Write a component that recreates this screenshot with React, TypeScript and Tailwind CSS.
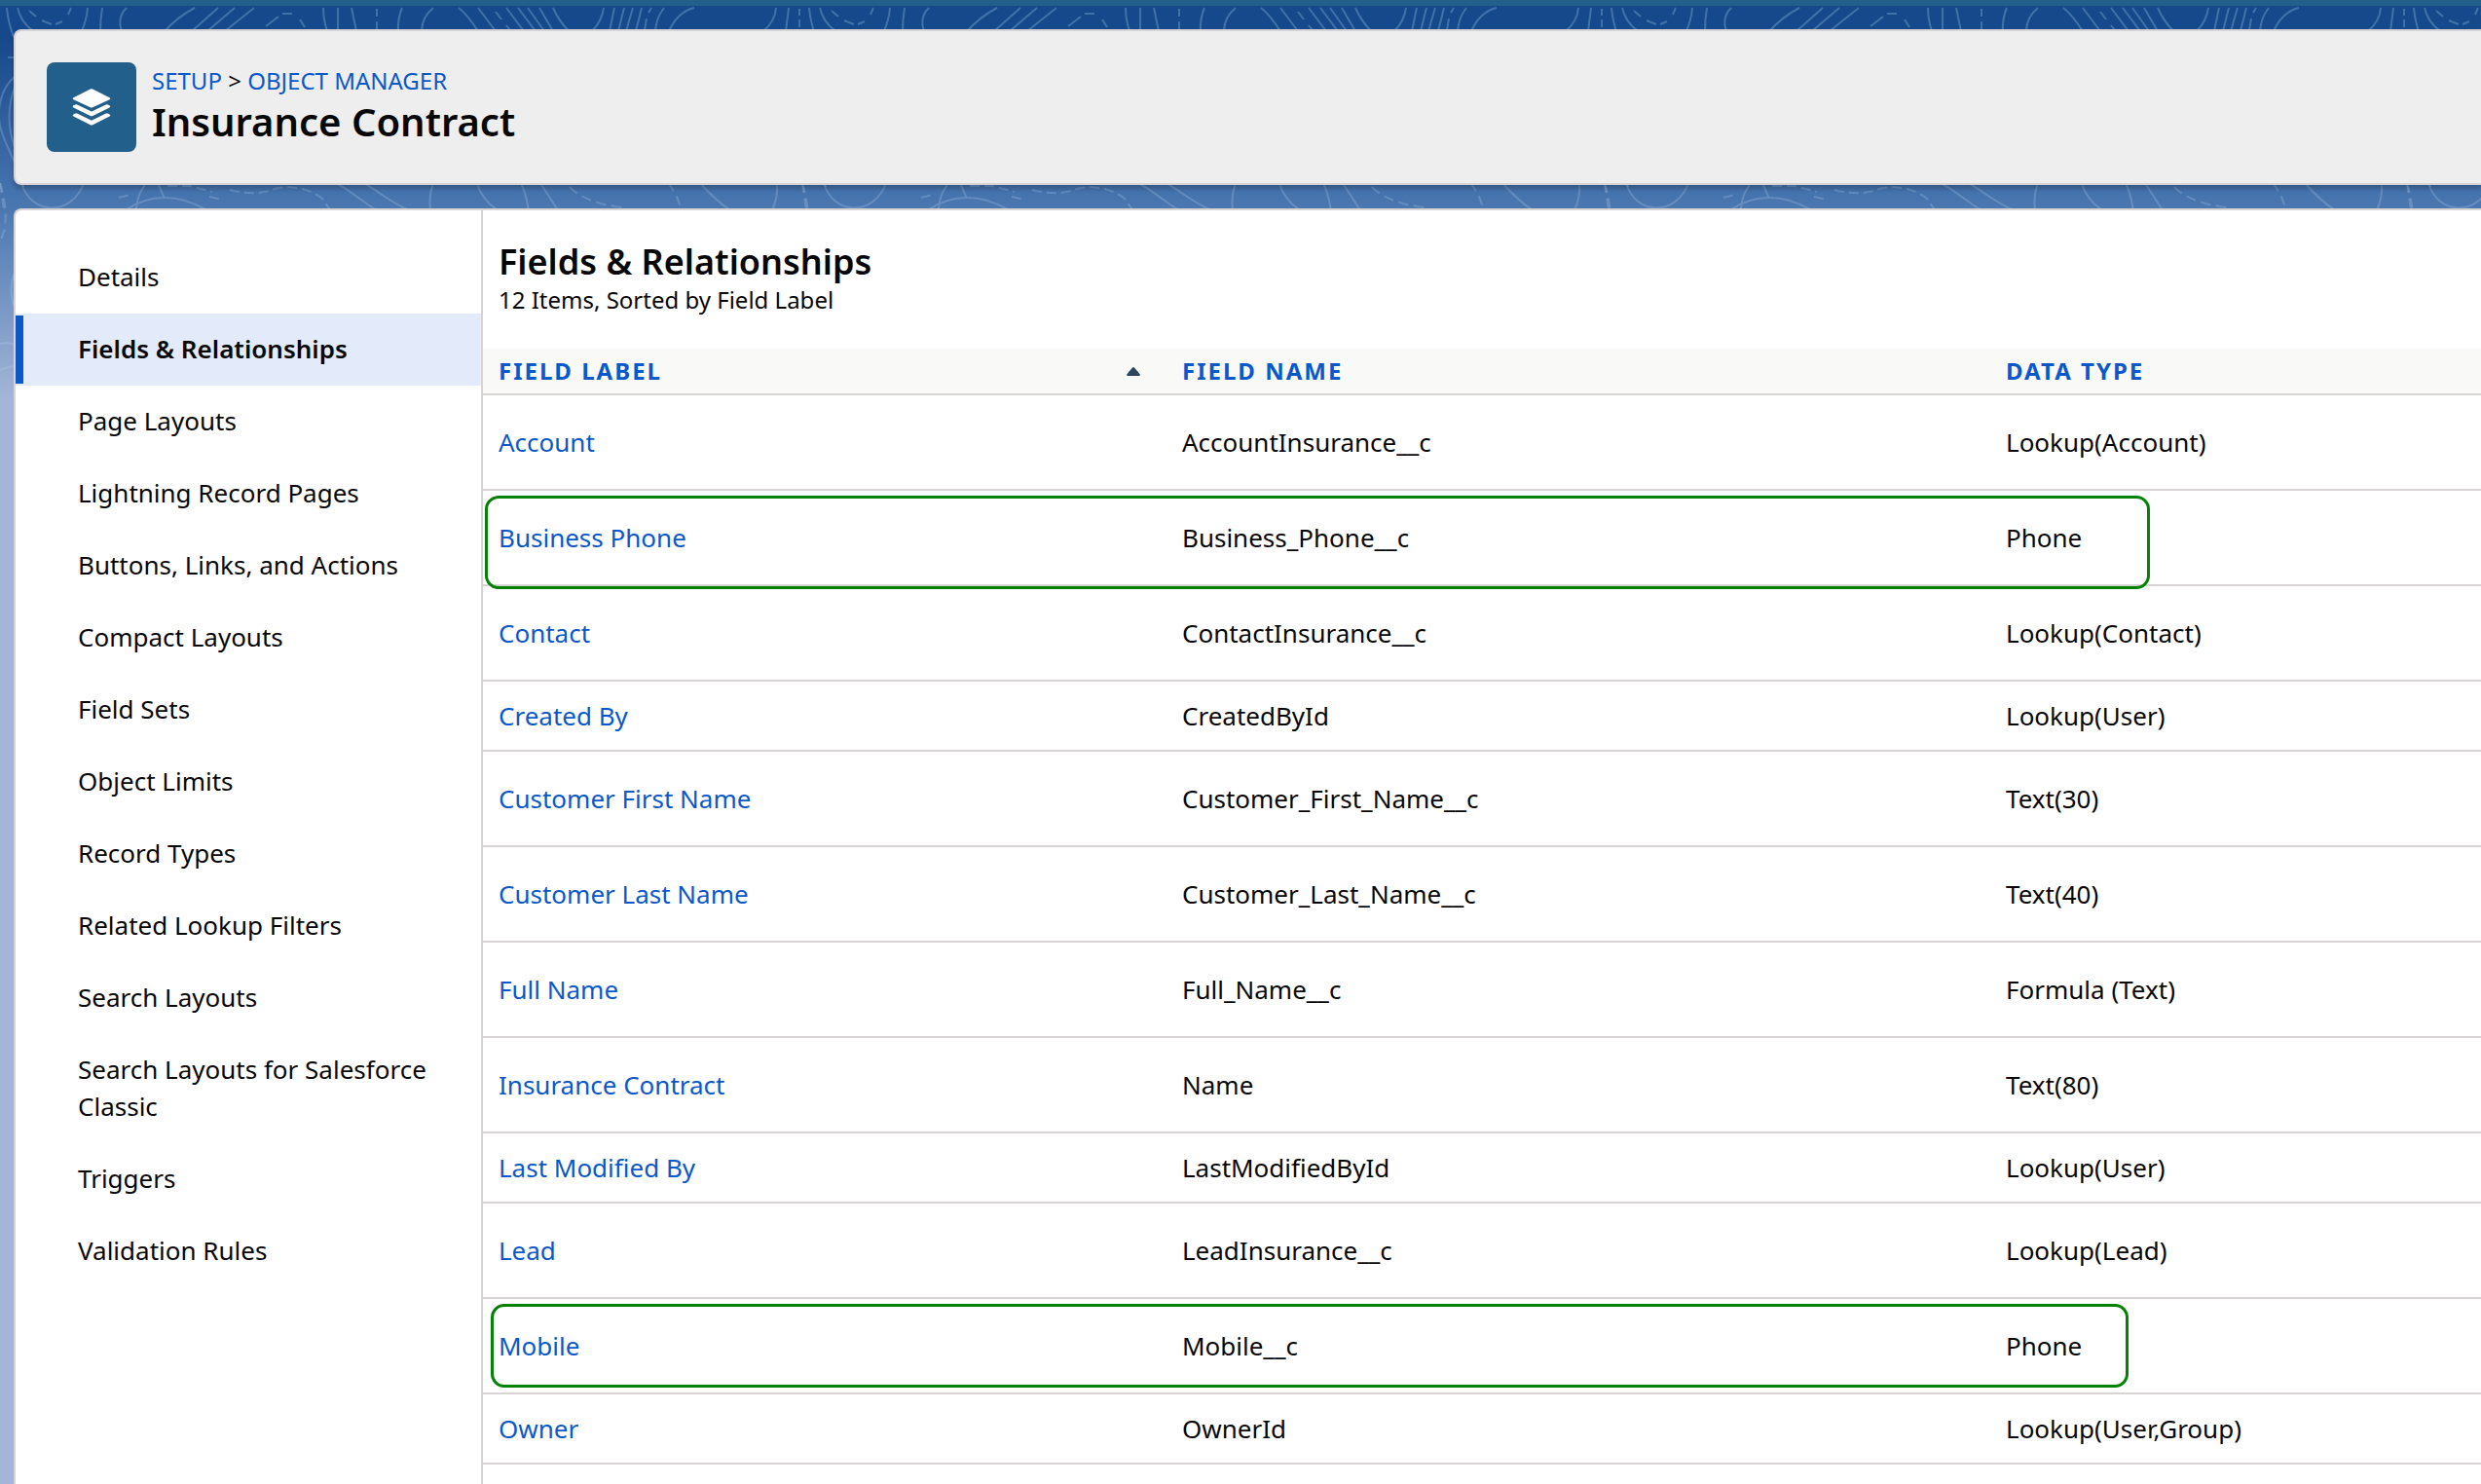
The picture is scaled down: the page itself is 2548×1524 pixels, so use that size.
import React from 'react'

const navItems = [
  'Details',
  'Fields & Relationships',
  'Page Layouts',
  'Lightning Record Pages',
  'Buttons, Links, and Actions',
  'Compact Layouts',
  'Field Sets',
  'Object Limits',
  'Record Types',
  'Related Lookup Filters',
  'Search Layouts',
  'Search Layouts for Salesforce Classic',
  'Triggers',
  'Validation Rules',
]

type Field = {
  label: string
  name: string
  type: string
  short?: boolean
  outline?: string
}

const fields: Field[] = [
  { label: 'Account', name: 'AccountInsurance__c', type: 'Lookup(Account)' },
  { label: 'Business Phone', name: 'Business_Phone__c', type: 'Phone', outline: 'left-[2px] right-[340px] h-24' },
  { label: 'Contact', name: 'ContactInsurance__c', type: 'Lookup(Contact)' },
  { label: 'Created By', name: 'CreatedById', type: 'Lookup(User)', short: true },
  { label: 'Customer First Name', name: 'Customer_First_Name__c', type: 'Text(30)' },
  { label: 'Customer Last Name', name: 'Customer_Last_Name__c', type: 'Text(40)' },
  { label: 'Full Name', name: 'Full_Name__c', type: 'Formula (Text)' },
  { label: 'Insurance Contract', name: 'Name', type: 'Text(80)' },
  { label: 'Last Modified By', name: 'LastModifiedById', type: 'Lookup(User)', short: true },
  { label: 'Lead', name: 'LeadInsurance__c', type: 'Lookup(Lead)' },
  { label: 'Mobile', name: 'Mobile__c', type: 'Phone', outline: 'left-[8px] right-[362px] h-[86px]' },
  { label: 'Owner', name: 'OwnerId', type: 'Lookup(User,Group)', short: true },
]

const App: React.FC = () => (
  <div className="relative min-h-screen overflow-hidden bg-[#a3b6d8] font-['Noto_Sans',sans-serif] text-[26px] text-[#080707]">
    <Backdrop />
    <div className="relative flex min-h-screen flex-col pl-3.5">
      <Header />
      <main className="mt-6 flex flex-1 rounded-tl-lg border-2 border-r-0 border-b-0 border-[#d8d4d4] bg-white">
        <Sidebar />
        <section className="min-w-0 flex-1">
          <div className="px-4 py-8">
            <h2 className="text-[36px] leading-[42px] font-semibold">Fields &amp; Relationships</h2>
            <p className="text-2xl leading-9">12 Items, Sorted by Field Label</p>
          </div>
          <FieldTable />
        </section>
      </main>
    </div>
  </div>
)

export default App

const Header: React.FC = () => (
  <header className="mt-[30px] flex h-40 items-start gap-4 rounded-l-lg border-2 border-r-0 border-[#d8d4d4] bg-[#eeeeee] px-8 pt-8 shadow-[0_4px_4px_rgba(0,0,0,0.2)]">
    <div className="flex size-[92px] items-center justify-center rounded-lg bg-[#225f8b]">
      <LayersIcon />
    </div>
    <div>
      <nav className="text-2xl leading-[38px]">
        <a href="#setup" className="text-[#0b58c8]">SETUP</a>
        {' > '}
        <a href="#object-manager" className="text-[#0b58c8]">OBJECT MANAGER</a>
      </nav>
      <h1 className="text-[40px] leading-[46px] font-semibold">Insurance Contract</h1>
    </div>
  </header>
)

const Sidebar: React.FC = () => (
  <nav className="w-[480px] shrink-0 border-r-2 border-[#d8d4d4] pt-8">
    <ul>
      {navItems.map((item) => (
        <li key={item}>
          {item === 'Fields & Relationships' ? (
            <a href="#fields" className="relative block bg-[#e3ebfa] pt-[17px] pr-8 pb-[19px] pl-16 leading-[38px] font-semibold">
              <span className="absolute inset-y-[2px] left-0 w-2 bg-[#0b58c8]" />
              {item}
            </a>
          ) : (
            <a href="#section" className="block pt-[17px] pr-8 pb-[19px] pl-16 leading-[38px]">
              {item}
            </a>
          )}
        </li>
      ))}
    </ul>
  </nav>
)

const FieldTable: React.FC = () => (
  <table className="w-full table-fixed border-separate border-spacing-0 text-left">
    <thead>
      <tr className="h-12 bg-[#f9f9f7] text-2xl text-[#0b58c8]">
        <th className="w-[34.21%] border-b-2 border-[#d8d4d4] pr-[27px] pl-4">
          <button className="flex w-full items-center justify-between font-bold tracking-[2px]">
            FIELD LABEL
            <SortIcon />
          </button>
        </th>
        <th className="w-[41.23%] border-b-2 border-[#d8d4d4] px-4">
          <button className="font-bold tracking-[2px]">FIELD NAME</button>
        </th>
        <th className="border-b-2 border-[#d8d4d4] px-4">
          <button className="font-bold tracking-[2px]">DATA TYPE</button>
        </th>
      </tr>
    </thead>
    <tbody>
      {fields.map((field) => (
        <tr key={field.label} className={field.short ? 'h-[72px]' : 'relative h-[98px]'}>
          <td className="border-b-2 border-[#d8d4d4] px-4">
            <a href="#field" className="text-[#0b58c8]">{field.label}</a>
            {field.outline && (
              <span className={`pointer-events-none absolute top-[5px] z-10 rounded-[14px] border-3 border-[#058205] ${field.outline}`} />
            )}
          </td>
          <td className="border-b-2 border-[#d8d4d4] px-4">{field.name}</td>
          <td className="border-b-2 border-[#d8d4d4] px-4">{field.type}</td>
        </tr>
      ))}
    </tbody>
  </table>
)

const SortIcon = () => (
  <svg className="h-[9px] w-3.5 fill-[#2e4560]" viewBox="0 0 14 9">
    <path d="M6 .5Q7-.5 8 .5L13.6 7.3Q14.4 9 12.8 9H1.2Q-.4 9 .4 7.3Z" />
  </svg>
)

const LayersIcon = () => (
  <svg className="h-[38px] w-10 fill-white" viewBox="0 0 40 38">
    <path d="M18.8.6Q20 0 21.2.6L38.5 9.2Q40.2 10.2 38.5 11.2L21.2 19.2Q20 19.8 18.8 19.2L1.5 11.2Q-.2 10.2 1.5 9.2Z" />
    <path d="M1.5 17.2L3.2 16.4Q4.2 16 5.2 16.4L20 23.6L34.8 16.4Q35.8 16 36.8 16.4L38.5 17.2Q40.2 18.3 38.5 19.4L21.2 28Q20 28.6 18.8 28L1.5 19.4Q-.2 18.3 1.5 17.2Z" />
    <path d="M1.5 26.4L3.2 25.6Q4.2 25.2 5.2 25.6L20 32.8L34.8 25.6Q35.8 25.2 36.8 25.6L38.5 26.4Q40.2 27.5 38.5 28.6L21.2 37.2Q20 37.8 18.8 37.2L1.5 28.6Q-.2 27.5 1.5 26.4Z" />
  </svg>
)

// Topographic lines, repeated every 824px over the blue gradient
const Backdrop = () => (
  <div className="absolute inset-x-0 top-0 h-[410px] border-t-6 border-[#225f8b] bg-linear-to-b from-[#16498b] from-8% via-[#4573ad] via-48% to-[#a3b6d8]">
    <svg className="h-full w-full" fill="none">
      <defs>
        <pattern id="contours" y="-6" width="824" height="416" patternUnits="userSpaceOnUse">
          <g stroke="#a6cdf0" strokeOpacity=".3" strokeWidth="2">
            <path d="M7 8Q8 22 14 38M18 8Q21 22 34 32M90 8Q89 20 84 32M105 8Q103 20 103 32M130 8Q120 18 125 32" />
            <path d="M200 8Q183 17 169 32M224 8L197 32M241 8L213 32M261 8L231 32" />
            <path d="M332 8Q332 20 336 32M347 8V32M361 8L366 32M413 8Q408 20 409 32M445 8Q433 18 433 32" />
            <path d="M471 8Q480 15 491 32M491 8L509 32M520 8L538 32M532 8L550 32M542 8L559 32M554 8L568 32M568 8Q573 20 584 32" />
            <path d="M620 8Q618 22 608 32M631 8L626 32M641 8L635 32M650 8L643 32M659 8L653 32M682 8Q674 18 673 32M713 8Q696 12 687 32" />
            <path d="M797 8Q796 22 784 32M810 8L807 32" />
            <path d="M30 11L37 17M43 21L53 25M57 25L64 22M73 8L70 15M286 17L273 27M290 14H300M308 20L313 28M387 9V17M387 22V31" />
            <path d="M509 12L515 20M520 26L524 31M669 8L666 13M664 19L662 31M821 9V16M821 20V28" />
          </g>
          <g stroke="#b4cdee" strokeOpacity=".26" strokeWidth="2">
            <path d="M22 188C32 222 74 222 86 188M150 188Q141 200 140 214M162 188L169 204M128 216Q168 190 213 216" />
            <path d="M344 188C356 192 370 206 387 216M373 188C386 194 398 206 420 216M445 188Q440 202 442 216M490 188Q494 204 511 216" />
            <path d="M535 188Q540 198 543 216M555 188L573 216M719 188Q734 205 750 216M798 188Q799 204 793 216" />
            <path strokeDasharray="10 5" d="M122 203L134 200M172 191H195L218 197M215 202L228 205M236 195Q262 202 282 194Q308 188 330 203L338 214" />
            <path strokeDasharray="10 6" d="M585 192Q600 208 638 213M686 188Q694 196 700 216M824 188L828 216M0 188L4 216" />
            <path d="M8 59H16M16 78C-2 92 -4 120 2 136C6 150 14 160 24 192M16 87Q3 120 16 154" />
            <path d="M16 278Q7 298 16 318M0 353Q8 351 16 354M0 380Q6 377 16 376" />
            <path strokeDasharray="10 6" d="M0 188Q9 218 4 238L0 248" />
          </g>
        </pattern>
      </defs>
      <rect width="100%" height="100%" fill="url(#contours)" />
    </svg>
  </div>
)
